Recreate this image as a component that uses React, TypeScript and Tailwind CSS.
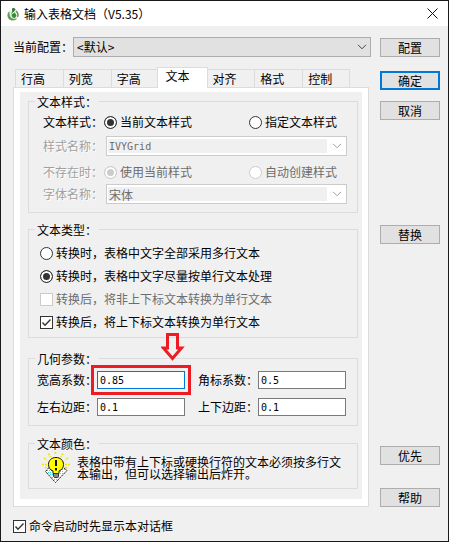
import React, { useState } from 'react';

const labelText = 'shrink-0 whitespace-nowrap';
const etchedText = 'text-[#a0a0a0] [text-shadow:1px_1px_0_#fff]';

const Chevron: React.FC<{ className: string }> = ({ className }) => (
  <svg viewBox="0 0 10 6" className={`pointer-events-none absolute h-1.5 w-2.5 ${className}`} fill="none" stroke="currentColor">
    <path d="M1 0.8L5 4.8L9 0.8" />
  </svg>
);

const AppIcon = () => (
  <svg viewBox="0 0 14 14" className="size-3.5 shrink-0">
    <circle cx="7" cy="8" r="5" fill="#e6f1e2" />
    <path d="M3.6 4.2C0.8 6 0.8 10 3 12C5.4 14.2 9.4 14 11.4 11.6L9.6 11.8C6.6 12 4.4 10.6 3.8 8.4C3.4 6.8 3.4 5.4 3.6 4.2Z" fill="#5f9e58" />
    <path d="M6 1.5L8 0.8L9.6 2.4L8.2 4.2L5 7L6.2 4.4Z" fill="#2f7a33" />
    <path d="M5.4 7.8L8.8 5.4L10.4 8.4L9 11L6.6 10.4Z" fill="#2f8a38" />
    <path d="M10 3.4C12.8 4.8 13.4 8 12 10.4L11 9.6C11.8 7.4 11.2 5.4 9.6 4.4Z" fill="#4f8a48" />
  </svg>
);

const BulbIcon = () => (
  <svg viewBox="0 0 28 32" className="h-8 w-7 shrink-0">
    <path d="M3.5 19L9 14H19L25 18.5L13.5 30.5Z" fill="#fff" />
    <path d="M5 18.5H10M6 20.5H10M8 22.5H11M18 17.5H23M18 19.5H22M18 21.5H21M10 25.5H18M12 27.5H16" fill="none" stroke="#35dcea" strokeDasharray="1 1" />
    <path d="M7 15.5L3.5 19.5L13.5 30.5L25 18.5L21.5 15.5" fill="none" stroke="#222" strokeDasharray="2.4 0.8" />
    <path d="M13.5 0V3M6.5 1.5L8.5 5M21 1.5L19 5M2 6L5 8M26 6L23 8M0 12.5H5M28 12.5H23M3 16L5 15M25 16L23 15" stroke="#efe600" strokeWidth="1.6" strokeDasharray="2 1" />
    <path d="M11 21.5V19C8 18 6.5 15.5 6.5 12.5C6.5 8.5 9.5 5.5 14 5.5C18.5 5.5 21.5 8.5 21.5 12.5C21.5 15.5 20 18 17 19V21.5Z" fill="#ff0" stroke="#111" />
    <path d="M11.5 21.5H16.5V24.5L15.5 25.5H12.5L11.5 24.5Z" fill="#8a8a8a" stroke="#333" />
    <path d="M14 8V14M14 16V18.5" stroke="#111" strokeWidth="2" />
  </svg>
);

interface ChoiceProps {
  type: 'radio' | 'checkbox';
  name: string;
  text: string;
  checked: boolean;
  onChange?: () => void;
  disabled?: boolean;
  className?: string;
}

const Choice: React.FC<ChoiceProps> = ({ type, name, text, checked, onChange, disabled = false, className = '' }) => (
  <label className={`flex items-center gap-[3px] whitespace-nowrap ${disabled ? 'text-[#6d6d6d]' : ''} ${className}`}>
    <span className="relative flex shrink-0">
      <input
        type={type}
        name={name}
        checked={checked}
        disabled={disabled}
        onChange={() => onChange?.()}
        className={
          type === 'radio'
            ? 'size-[13px] appearance-none rounded-full border border-[#333] bg-white checked:bg-[#333] checked:shadow-[inset_0_0_0_2px_#fff] disabled:border-[#ccc] disabled:checked:bg-[#ccc]'
            : 'size-[13px] appearance-none border border-[#333] bg-white disabled:border-[#ccc]'
        }
      />
      {type === 'checkbox' && checked && (
        <svg viewBox="0 0 13 13" className="pointer-events-none absolute inset-0 size-[13px]" fill="none" stroke="#333" strokeWidth="1.4">
          <path d="M2.5 6.5L5 9.2L10.5 3.5" />
        </svg>
      )}
    </span>
    {text}
  </label>
);

const Group: React.FC<{ title: string; className: string; children: React.ReactNode }> = ({ title, className, children }) => (
  <fieldset className={`min-w-0 border border-[#dcdcdc] px-1.5 ${className}`}>
    <legend className="h-[13px] px-0.5 leading-[13px]">{title}</legend>
    {children}
  </fieldset>
);

const DisabledCombo: React.FC<{ id: string; label: string; value: string; mono?: boolean }> = ({ id, label, value, mono }) => (
  <div className="flex h-5 items-center gap-[3px]">
    <label htmlFor={id} className={`${labelText} ${etchedText}`}>{label}</label>
    <div className="relative flex h-5 flex-1 border border-[#ccc] bg-white py-0.5 pr-[19px] pl-px">
      <select
        id={id}
        disabled
        className={`w-full appearance-none bg-[#f0f0f0] px-px text-[#6d6d6d] opacity-100 ${mono ? "font-['DejaVu_Sans_Mono',monospace] text-[10px]" : ''}`}
      >
        <option>{value}</option>
      </select>
      <Chevron className="top-1.5 right-1 text-[#a0a0a0]" />
    </div>
  </div>
);

interface NumberFieldProps {
  id: string;
  label: string;
  initial: string;
  active?: boolean;
}

const NumberField: React.FC<NumberFieldProps> = ({ id, label, initial, active }) => {
  const [value, setValue] = useState(initial);
  return (
    <div className="flex min-w-0 items-center">
      <label htmlFor={id} className={labelText}>{label}</label>
      <div className="relative flex min-w-0 flex-1">
        <input
          id={id}
          type="text"
          value={value}
          onChange={(e) => setValue(e.target.value)}
          className={`h-[18px] w-full min-w-0 border bg-white px-0.5 font-['DejaVu_Sans_Mono',monospace] text-[10px] outline-none ${active ? 'border-[#0078d7]' : 'border-[#7a7a7a]'}`}
        />
        {active && (
          <>
            <span className="pointer-events-none absolute -inset-1.5 border-3 border-[#ed1c24]" />
            <svg viewBox="0 0 24 28" className="pointer-events-none absolute right-0 bottom-7 h-7 w-6" fill="none" stroke="#ed1c24" strokeWidth="3">
              <path d="M6.5 1.5H16.5V15H20.5L11.5 25.5L2.5 15H6.5Z" />
            </svg>
          </>
        )}
      </div>
    </div>
  );
};

const tabs = ['行高', '列宽', '字高', '文本', '对齐', '格式', '控制'];

const DialogButton: React.FC<{ text: string; primary?: boolean; className?: string }> = ({ text, primary, className = '' }) => (
  <button
    type="button"
    className={`flex h-[19px] w-full items-center justify-center bg-[#e1e1e1] ${primary ? 'border-2 border-[#0078d7]' : 'border border-[#adadad]'} ${className}`}
  >
    {text}
  </button>
);

const App: React.FC = () => {
  const [activeTab, setActiveTab] = useState('文本');
  const [styleMode, setStyleMode] = useState('current');
  const [textMode, setTextMode] = useState('single');
  const [convertScript, setConvertScript] = useState(true);
  const [showOnStart, setShowOnStart] = useState(true);

  return (
    <div className="flex min-h-screen flex-col border border-[#1a1a1a] bg-[#f0f0f0] font-['Noto_Sans_CJK_SC',sans-serif] text-xs leading-4 text-black">
      <header className="flex h-[25px] items-center gap-1 bg-white pr-2.5 pl-[5px]">
        <AppIcon />
        <h1 className="flex-1">输入表格文档（V5.35）</h1>
        <button type="button" aria-label="关闭" className="flex">
          <svg viewBox="0 0 11 11" className="size-[11px]" stroke="#111" fill="none">
            <path d="M0.5 0.5L10.5 10.5M10.5 0.5L0.5 10.5" />
          </svg>
        </button>
      </header>

      <div className="flex gap-[9px] pt-[11px] pr-2 pl-3">
        <main className="flex min-w-0 flex-1 flex-col">
          <div className="flex items-center">
            <label htmlFor="config" className={labelText}>当前配置：</label>
            <div className="relative flex flex-1">
              <select id="config" className="h-5 w-full appearance-none border border-[#adadad] bg-[#e1e1e1] px-[3px]">
                <option>&lt;默认&gt;</option>
              </select>
              <Chevron className="top-[7px] right-1 text-[#444]" />
            </div>
          </div>

          <div role="tablist" className="mt-2.5 mr-0.5 grid h-5 grid-cols-7 items-end pr-[19px] pl-0.5">
            {tabs.map((tab) => (
              <button
                key={tab}
                type="button"
                role="tab"
                aria-selected={tab === activeTab}
                onClick={() => setActiveTab(tab)}
                className={
                  tab === activeTab
                    ? 'relative -mx-0.5 -mb-px h-[21px] border border-b-0 border-[#dcdcdc] bg-white pb-1 pl-2 text-left'
                    : 'h-[18px] border border-r-0 border-b-0 border-[#dcdcdc] pl-[5px] text-left last:border-r'
                }
              >
                {tab}
              </button>
            ))}
          </div>

          <div role="tabpanel" className="mr-0.5 border border-[#dcdcdc] bg-white px-1.5 pt-1 pb-[7px]">
            <div className="bg-[#f0f0f0] pt-[3px] pr-1 pb-2.5 pl-2">
              <Group title="文本样式：" className="pb-2">
                <div className="flex flex-col gap-1 pt-1 pr-1 pl-2">
                  <div className="flex h-5 items-center gap-px">
                    <span className={labelText}>文本样式：</span>
                    <Choice type="radio" name="style" text="当前文本样式" checked={styleMode === 'current'} onChange={() => setStyleMode('current')} className="w-36" />
                    <Choice type="radio" name="style" text="指定文本样式" checked={styleMode === 'named'} onChange={() => setStyleMode('named')} />
                  </div>
                  <DisabledCombo id="style-name" label="样式名称：" value="IVYGrid" mono />
                </div>
                <div className="mt-1.5 flex flex-col gap-0.5 pr-1 pl-2">
                  <div className="flex h-5 items-center gap-px">
                    <span className={`${labelText} ${etchedText}`}>不存在时：</span>
                    <Choice type="radio" name="missing" text="使用当前样式" checked disabled className="w-36" />
                    <Choice type="radio" name="missing" text="自动创建样式" checked={false} disabled />
                  </div>
                  <DisabledCombo id="font-name" label="字体名称：" value="宋体" />
                </div>
              </Group>

              <Group title="文本类型：" className="mt-2.5 pb-[7px]">
                <div className="flex flex-col gap-[7px] pt-[9px] pl-[5px]">
                  <Choice type="radio" name="text-mode" text="转换时，表格中文字全部采用多行文本" checked={textMode === 'multi'} onChange={() => setTextMode('multi')} />
                  <Choice type="radio" name="text-mode" text="转换时，表格中文字尽量按单行文本处理" checked={textMode === 'single'} onChange={() => setTextMode('single')} />
                  <Choice type="checkbox" name="convert-plain" text="转换后，将非上下标文本转换为单行文本" checked={false} disabled />
                  <Choice type="checkbox" name="convert-script" text="转换后，将上下标文本转换为单行文本" checked={convertScript} onChange={() => setConvertScript(!convertScript)} />
                </div>
              </Group>

              <Group title="几何参数：" className="mt-3.5 pb-[9px]">
                <div className="grid grid-cols-2 gap-x-[13px] gap-y-[9px] pt-1.5 pr-[5px] pl-0.5">
                  <NumberField id="width-ratio" label="宽高系数：" initial="0.85" active />
                  <NumberField id="script-ratio" label="角标系数：" initial="0.5" />
                  <NumberField id="margin-x" label="左右边距：" initial="0.1" />
                  <NumberField id="margin-y" label="上下边距：" initial="0.1" />
                </div>
              </Group>

              <Group title="文本颜色：" className="mt-[11px] pb-1">
                <div className="flex items-center gap-[7px] pt-0.5 pr-1 pl-[7px]">
                  <BulbIcon />
                  <p className="leading-3">表格中带有上下标或硬换行符的文本必须按多行文本输出，但可以选择输出后炸开。</p>
                </div>
              </Group>
            </div>
          </div>
        </main>

        <aside className="flex w-[60px] shrink-0 flex-col pt-px">
          <DialogButton text="配置" />
          <DialogButton text="确定" primary className="mt-3.5" />
          <DialogButton text="取消" className="mt-[11px]" />
          <DialogButton text="替换" className="mt-[105px]" />
          <DialogButton text="优先" className="mt-[202px]" />
          <DialogButton text="帮助" className="mt-[23px]" />
        </aside>
      </div>

      <footer className="pt-[11px] pl-3">
        <Choice type="checkbox" name="show-on-start" text="命令启动时先显示本对话框" checked={showOnStart} onChange={() => setShowOnStart(!showOnStart)} />
      </footer>
    </div>
  );
};

export default App;
